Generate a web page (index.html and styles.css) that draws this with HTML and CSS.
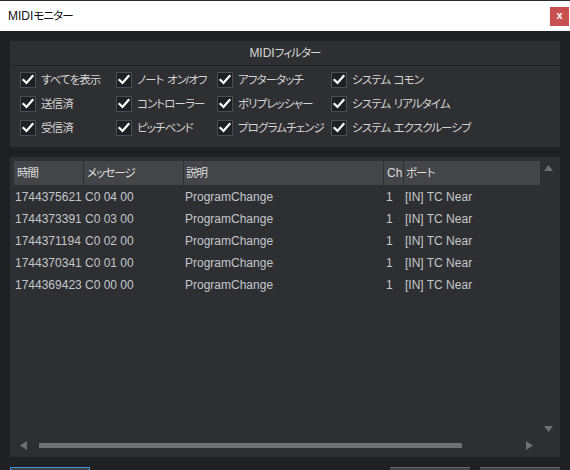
FILE: index.html
```html
<!DOCTYPE html>
<html lang="ja">
<head>
<meta charset="utf-8">
<title>MIDIモニター</title>
<link rel="stylesheet" href="styles.css">
</head>
<body>
<div class="window">
  <header class="titlebar">
    <span class="title">MIDI<span class="ja">モニター</span></span>
    <button class="close" type="button">x</button>
  </header>
  <main class="content">
    <section class="filter">
      <div class="filter-head">MIDI<span class="ja">フィルター</span></div>
      <div class="filter-grid">
        <label class="check"><span class="box"><svg viewBox="0 0 16 16"><polyline points="3.5,8 6.5,11 12.5,4"/></svg></span><span class="ja">すべてを表示</span></label>
        <label class="check"><span class="box"><svg viewBox="0 0 16 16"><polyline points="3.5,8 6.5,11 12.5,4"/></svg></span><span class="ja">ノート オン/オフ</span></label>
        <label class="check"><span class="box"><svg viewBox="0 0 16 16"><polyline points="3.5,8 6.5,11 12.5,4"/></svg></span><span class="ja">アフタータッチ</span></label>
        <label class="check"><span class="box"><svg viewBox="0 0 16 16"><polyline points="3.5,8 6.5,11 12.5,4"/></svg></span><span class="ja">システム コモン</span></label>
        <label class="check"><span class="box"><svg viewBox="0 0 16 16"><polyline points="3.5,8 6.5,11 12.5,4"/></svg></span><span class="ja">送信済</span></label>
        <label class="check"><span class="box"><svg viewBox="0 0 16 16"><polyline points="3.5,8 6.5,11 12.5,4"/></svg></span><span class="ja">コントローラー</span></label>
        <label class="check"><span class="box"><svg viewBox="0 0 16 16"><polyline points="3.5,8 6.5,11 12.5,4"/></svg></span><span class="ja">ポリプレッシャー</span></label>
        <label class="check"><span class="box"><svg viewBox="0 0 16 16"><polyline points="3.5,8 6.5,11 12.5,4"/></svg></span><span class="ja">システム リアルタイム</span></label>
        <label class="check"><span class="box"><svg viewBox="0 0 16 16"><polyline points="3.5,8 6.5,11 12.5,4"/></svg></span><span class="ja">受信済</span></label>
        <label class="check"><span class="box"><svg viewBox="0 0 16 16"><polyline points="3.5,8 6.5,11 12.5,4"/></svg></span><span class="ja">ピッチベンド</span></label>
        <label class="check"><span class="box"><svg viewBox="0 0 16 16"><polyline points="3.5,8 6.5,11 12.5,4"/></svg></span><span class="ja">プログラムチェンジ</span></label>
        <label class="check"><span class="box"><svg viewBox="0 0 16 16"><polyline points="3.5,8 6.5,11 12.5,4"/></svg></span><span class="ja">システム エクスクルーシブ</span></label>
      </div>
    </section>

    <section class="log">
      <div class="log-main">
        <div class="thead">
          <div class="th"><span class="ja">時間</span></div>
          <div class="th"><span class="ja">メッセージ</span></div>
          <div class="th th-desc"><span class="ja">説明</span></div>
          <div class="th">Ch</div>
          <div class="th th-port"><span class="ja">ポート</span></div>
        </div>
        <div class="tbody">
          <div class="tr"><div class="td">1744375621</div><div class="td">C0 04 00</div><div class="td">ProgramChange</div><div class="td td-ch">1</div><div class="td">[IN] TC Near</div></div>
          <div class="tr"><div class="td">1744373391</div><div class="td">C0 03 00</div><div class="td">ProgramChange</div><div class="td td-ch">1</div><div class="td">[IN] TC Near</div></div>
          <div class="tr"><div class="td">1744371194</div><div class="td">C0 02 00</div><div class="td">ProgramChange</div><div class="td td-ch">1</div><div class="td">[IN] TC Near</div></div>
          <div class="tr"><div class="td">1744370341</div><div class="td">C0 01 00</div><div class="td">ProgramChange</div><div class="td td-ch">1</div><div class="td">[IN] TC Near</div></div>
          <div class="tr"><div class="td">1744369423</div><div class="td">C0 00 00</div><div class="td">ProgramChange</div><div class="td td-ch">1</div><div class="td">[IN] TC Near</div></div>
        </div>
        <div class="hscroll">
          <svg class="arrow-h" viewBox="0 0 7 9"><polygon points="7,0 7,9 0,4.5"/></svg>
          <div class="htrack"><div class="hthumb"></div></div>
          <svg class="arrow-h" viewBox="0 0 7 9"><polygon points="0,0 0,9 7,4.5"/></svg>
        </div>
      </div>
      <div class="vscroll">
        <svg class="arrow-v" viewBox="0 0 9 6"><polygon points="0,6 9,6 4.5,0"/></svg>
        <svg class="arrow-v" viewBox="0 0 9 6"><polygon points="0,0 9,0 4.5,6"/></svg>
      </div>
    </section>

    <div class="buttons">
      <button class="btn btn-focus" type="button" aria-label="button 1"></button>
      <div class="btn-right">
        <button class="btn" type="button" aria-label="button 2"></button>
        <button class="btn" type="button" aria-label="button 3"></button>
      </div>
    </div>
  </main>
</div>
</body>
</html>
```

FILE: styles.css
```css
* {
  box-sizing: border-box;
}

html, body {
  margin: 0;
  padding: 0;
}

body {
  width: 570px;
  height: 470px;
  overflow: hidden;
  background: #1f2023;
  font-family: "Liberation Sans", "Noto Sans CJK JP", sans-serif;
  font-feature-settings: "palt";
  font-size: 12px;
  line-height: 1;
}

.ja {
  font-size: 11.5px;
  letter-spacing: -0.9px;
  word-spacing: 1px;
}

.window {
  width: 570px;
  height: 470px;
  display: flex;
  flex-direction: column;
  overflow: hidden;
}

/* Title bar */
.titlebar {
  height: 31px;
  flex: none;
  border-top: 1px solid #2a2b2d;
  background: #ffffff;
  display: flex;
  align-items: center;
  justify-content: space-between;
  padding-left: 8px;
}

.title {
  color: #111111;
  font-size: 12px;
  line-height: 14px;
}

.close {
  width: 19px;
  height: 19px;
  margin-right: 1px;
  border: none;
  padding: 0 0 2px 0;
  background: #c8504f;
  color: #ffffff;
  font-family: "Liberation Sans", sans-serif;
  font-weight: bold;
  font-size: 11px;
  line-height: 17px;
  text-align: center;
}

/* Content */
.content {
  flex: 1;
  display: flex;
  flex-direction: column;
  gap: 10px;
  padding: 10px 10px 0 10px;
  background: #1f2023;
}

/* Filter panel */
.filter {
  height: 106px;
  flex: none;
  background: #2e2f32;
  display: flex;
  flex-direction: column;
}

.filter-head {
  height: 25px;
  border-bottom: 1px solid #232427;
  display: flex;
  align-items: center;
  justify-content: center;
  color: #d6d6d6;
  line-height: 14px;
}

.filter-grid {
  display: grid;
  grid-template-columns: 96px 101px 114px 1fr;
  grid-auto-rows: 24px;
  padding: 2px 0 0 10px;
}

.check {
  display: flex;
  align-items: center;
  gap: 5px;
  color: #d4d4d4;
  line-height: 14px;
  white-space: nowrap;
}

.box {
  width: 16px;
  height: 16px;
  flex: none;
  border: 1px solid #4c4d50;
  background: #1f2023;
  display: flex;
  align-items: center;
  justify-content: center;
}

.box svg {
  width: 16px;
  height: 16px;
  flex: none;
  margin: -1px;
}

.box polyline {
  fill: none;
  stroke: #ffffff;
  stroke-width: 2.2;
  stroke-linecap: square;
}

/* Log panel */
.log {
  height: 300px;
  flex: none;
  background: #2e2f32;
  display: grid;
  grid-template-columns: 1fr 20px;
  padding: 4px 0 3px 4px;
}

.log-main {
  display: flex;
  flex-direction: column;
  min-width: 0;
}

.thead,
.tr {
  display: grid;
  grid-template-columns: 69px 99px 199px 19px 1fr;
  column-gap: 1px;
}

.thead {
  height: 24px;
}

.th {
  background: #434548;
  color: #dcdcdc;
  display: flex;
  align-items: center;
  padding-left: 3px;
  line-height: 14px;
  white-space: nowrap;
  overflow: hidden;
}

.th-desc,
.th-port {
  padding-left: 2px;
}

.tbody {
  flex: 1;
  padding-top: 1px;
}

.tr {
  height: 22px;
}

.td {
  color: #c3c7cc;
  display: flex;
  align-items: center;
  padding-left: 1px;
  white-space: nowrap;
  line-height: 14px;
}

.td-ch {
  padding-left: 2px;
}

.hscroll {
  height: 17px;
  flex: none;
  display: flex;
  align-items: center;
  padding: 0 7px 0 6px;
}

.arrow-h {
  width: 7px;
  height: 9px;
  flex: none;
  fill: #6f7073;
}

.htrack {
  flex: 1;
  margin: 0 12px;
  height: 5px;
}

.hthumb {
  width: 89%;
  height: 5px;
  background: #6f7073;
}

.vscroll {
  display: flex;
  flex-direction: column;
  justify-content: space-between;
  align-items: flex-start;
  padding: 4px 0 22px 4px;
}

.arrow-v {
  width: 9px;
  height: 6px;
  fill: #6f7073;
}

/* Buttons */
.buttons {
  display: flex;
  justify-content: space-between;
  flex: none;
}

.btn-right {
  display: flex;
  gap: 10px;
}

.btn {
  width: 80px;
  height: 24px;
  border: none;
  border-top: 1px solid #5d6064;
  background: #404245;
  padding: 0;
}

.btn-focus {
  border: 1px solid #3f8fd8;
}
```
